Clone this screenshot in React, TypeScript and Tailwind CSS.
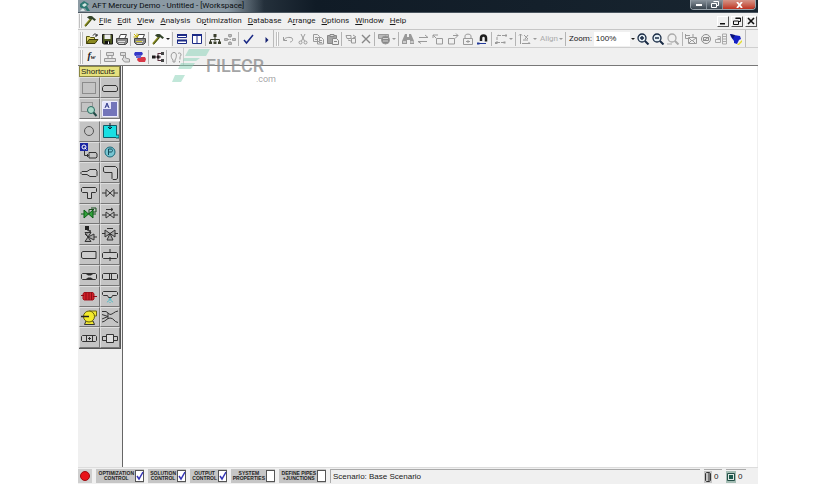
import { useState } from 'react';
import type { ReactNode } from 'react';

const INK = '#1c1c1c';
const DIM = '#9a9a9a';
const NAVY = '#1b2a86';

// 14x12 glyph used by both toolbars.
function Glyph({ children, stroke = INK }: { children: ReactNode; stroke?: string }) {
  return (
    <svg viewBox="0 0 14 12" className="h-3 w-3.5" fill="none" stroke={stroke} strokeWidth="1" aria-hidden>
      {children}
    </svg>
  );
}

// 18x18 glyph used by the shortcut palette.
function Part({ children }: { children: ReactNode }) {
  return (
    <svg viewBox="0 0 18 18" className="h-[18px] w-[18px]" fill="none" stroke="#333" strokeWidth="1" aria-hidden>
      {children}
    </svg>
  );
}

function Tool({ label, children }: { label: string; children: ReactNode }) {
  return (
    <button type="button" aria-label={label} className="flex h-4 w-[15px] shrink-0 items-center justify-center">
      {children}
    </button>
  );
}

function Caret({ label, dim }: { label: string; dim?: boolean }) {
  return (
    <button type="button" aria-label={label} className="flex h-4 w-1.5 shrink-0 items-center justify-center">
      <svg viewBox="0 0 4 2" className="h-0.5 w-1" fill={dim ? DIM : INK} aria-hidden>
        <path d="M0 0h4L2 2z" />
      </svg>
    </button>
  );
}

const Sep = () => <span className="mx-px h-3.5 w-px shrink-0 bg-[#b4b4b4]" />;
const Grip = () => <span className="mr-px h-3.5 w-[3px] shrink-0 border-x border-[#c0c0c0] bg-white" />;

const Hammer = () => (
  <Glyph>
    <path d="M2 11 8 4" stroke="#8a8a1c" strokeWidth="2" />
    <path d="M2.600 11.300 8.600 4.300" stroke="#3a4a1c" />
    <path d="M4 2.500C6 .5 9 .8 10.500 2.500L13 4.500 11.500 6 9 4 7 4.500z" fill="#35452b" stroke="none" />
  </Glyph>
);

const Printer = ({ sun }: { sun?: boolean }) => (
  <Glyph stroke="#444">
    <path d="M4 5 5.500 1.500h6L10 5" fill="#fff" />
    <path d="M1.500 5.500h11v4l-2 2h-7l-2-2z" fill="#888" />
    <path d="M3 8.500h7M4 10.500h5" stroke="#ddd" />
    {sun && <path d="M1 1l3 3M4 .5v3M.5 4H4M6 2 4 4" stroke="#c8b400" />}
    {sun && <path d="M3 8.500h6" stroke="#d8cc30" />}
  </Glyph>
);

const Lens = ({ sign, dim }: { sign?: string; dim?: boolean }) => (
  <Glyph stroke={dim ? '#aaa' : '#182a44'}>
    <circle cx="6" cy="5" r="4" fill={dim ? 'none' : '#e4eef4'} strokeWidth="1.300" />
    {sign && <path d={sign} strokeWidth="1.500" />}
    <path d="m9 8 3.500 3.500" strokeWidth="2" />
    {dim && <path d="M1 11h5" />}
  </Glyph>
);

const FILE_TOOLS = (
  <>
    <Tool label="Open">
      <Glyph>
        <path d="M1.500 10.500v-7h3l1 1h4V6" fill="#e2d870" stroke="#555410" />
        <path d="M1.500 10.500 4 6.500h9l-3 4z" fill="#8a881e" stroke="#3d3c08" />
        <path d="M8 2.500c1-2 3-2 4 0m0-1.500v2h-2" />
      </Glyph>
    </Tool>
    <Tool label="Save">
      <Glyph>
        <path d="M2.500 1.500h10v9.500h-9l-1-1z" fill="#4c5720" />
        <path d="M4.500 1.500h6V6h-6z" fill="#eee" stroke="none" />
        <path d="M5 8h5v3H5z" fill="#111" stroke="none" />
        <path d="M8.500 8.500V11" stroke="#fff" />
      </Glyph>
    </Tool>
    <Tool label="Print"><Printer /></Tool>
    <Sep />
    <Tool label="Print special"><Printer sun /></Tool>
    <Sep />
    <span className="flex h-full items-center bg-[#fafafa]">
      <Tool label="Tool"><Hammer /></Tool>
      <Caret label="Tool options" />
    </span>
    <Sep />
    <Tool label="Tile horizontally">
      <Glyph stroke={NAVY}>
        <path d="M2.500 1.500h9v3h-9zM2.500 7.500h9v3h-9z" fill="#fff" />
        <path d="M2 2h10M2 7.500h10" strokeWidth="2" />
      </Glyph>
    </Tool>
    <Tool label="Tile vertically">
      <Glyph stroke={NAVY}>
        <path d="M2.500 1.500h9v9h-9zM7 1.500v9" fill="#fff" />
        <path d="M2 2h10" strokeWidth="2" />
      </Glyph>
    </Tool>
    <Sep />
    <Tool label="Scenario manager">
      <Glyph stroke="#3a3f2c">
        <path d="M7 3v5M2.500 9V6.500h9V9" />
        <path d="M5.500 1h3v3h-3zM1 8.500h3v2.500H1zM5.500 8.500h3V11h-3zM10 8.500h3V11h-3z" fill="#3a3f2c" stroke="none" />
      </Glyph>
    </Tool>
    <Tool label="Scenario child">
      <Glyph stroke="#a0a0a0">
        <path d="M5.500 1.500h3v2h-3zM1.500 5.500h3v2h-3zM9.500 5.500h3v2h-3zM5.500 9.500h3v2h-3z" fill="#bbb" />
        <path d="M7 4v5M5 6.500h4" strokeDasharray="1 1" />
      </Glyph>
    </Tool>
    <Sep />
    <Tool label="Checklist">
      <Glyph stroke={NAVY}><path d="m3 7 2.500 3L12 2" strokeWidth="1.500" /></Glyph>
    </Tool>
    <span className="w-0.5 shrink-0" />
    <Tool label="Run">
      <Glyph stroke="none"><path d="M7.500 4v6l3-3z" fill="#142070" /></Glyph>
    </Tool>
  </>
);

const EDIT_TOOLS = (
  <>
    <Tool label="Undo">
      <Glyph stroke={DIM}><path d="M3 7c1-3 6-3 8-2 1.500 2 0 4-2 4M2.500 4v3.500H6" /></Glyph>
    </Tool>
    <Tool label="Cut">
      <Glyph stroke={DIM}>
        <path d="m5 1 3.500 7M9 1 5.500 8" />
        <circle cx="4.500" cy="9.500" r="1.500" /><circle cx="9.500" cy="9.500" r="1.500" />
      </Glyph>
    </Tool>
    <Tool label="Copy">
      <Glyph stroke={DIM}>
        <path d="M2.500 1.500h4l2 2v5h-6zM6.500 4.500h4l2 2v4.500h-6z" fill="#eee" />
        <path d="M4 4.500h2M4 6.500h2M8 7.500h3M8 9.500h3" />
      </Glyph>
    </Tool>
    <Tool label="Paste">
      <Glyph stroke="#888">
        <path d="M1.500 2.500h9v8h-9z" fill="#a5a5a5" />
        <path d="M4 1.500h4v2H4z" fill="#ddd" />
        <path d="M6.500 5.500h4l2 2v4h-6z" fill="#eee" />
        <path d="M8 8.500h3" />
      </Glyph>
    </Tool>
    <Sep />
    <Tool label="Duplicate">
      <Glyph stroke={DIM}>
        <path d="M2 2.500h5v3H3zM7.500 5.500h4V10h-4zM9 2l3 2-3 1M4 7l3 1" />
      </Glyph>
    </Tool>
    <Tool label="Delete">
      <Glyph stroke="#888"><path d="m3 2 8 8M11 2l-8 8" strokeWidth="1.400" /></Glyph>
    </Tool>
    <Sep />
    <Tool label="Select special">
      <Glyph stroke="#999">
        <path d="M1.500 1.500h10v4h-10z" fill="#bbb" />
        <circle cx="8.500" cy="7" r="4" fill="#888" />
        <path d="M6 5.500h5M6 8h5" stroke="#d4d4d4" />
      </Glyph>
    </Tool>
    <Caret label="Select options" dim />
    <Sep />
    <Tool label="Find">
      <Glyph stroke="none">
        <path d="M4 1h2v3h2V1h2l3 7v3H9V7H6v4H1V8z" fill="#999" />
        <path d="M2 8h3v2H2zM9.500 8h3v2h-3z" fill="#ccc" />
      </Glyph>
    </Tool>
    <Tool label="Reverse direction">
      <Glyph stroke={DIM}><path d="M3 4.500h9m-3-2.500 3 2.500M11 8.500H2m3 2-3-2" /></Glyph>
    </Tool>
    <Tool label="Rotate left">
      <Glyph stroke={DIM}><path d="M5.500 5.500h6v5.500h-6zM2 5V2h5M2 2l3 3" /></Glyph>
    </Tool>
    <Tool label="Rotate right">
      <Glyph stroke={DIM}><path d="M2.500 5.500h6v5.500h-6zM7 2.500h5M10 .5l2 2-3 3" /></Glyph>
    </Tool>
    <Tool label="Lock">
      <Glyph stroke={DIM}>
        <path d="M4 6V3c0-2.500 6-2.500 6 0v3M2.500 5.500h9v6h-9z" />
        <path d="M7 7v3M5 8.500h4" />
      </Glyph>
    </Tool>
    <Tool label="Snap">
      <Glyph>
        <path d="M5 8V5c0-3.500 5-3.500 5 0v3.500" strokeWidth="2.500" />
        <path d="M2 10.500h8" stroke="#223a9a" /><path d="M1 9.500h2.500v2H1z" fill="#223a9a" stroke="none" />
      </Glyph>
    </Tool>
    <Sep />
    <Tool label="Segments">
      <Glyph stroke={DIM}>
        <path d="M4 2.500h8M3 4v5M3 9.500h7M3 3l2-1" strokeDasharray="3 1" />
        <path d="M11 1.500h2v2h-2zM1 9h2.500v2H1zM9.500 8.500h2v2h-2z" fill={DIM} stroke="none" />
      </Glyph>
    </Tool>
    <Caret label="Segment options" dim />
    <Sep />
    <Tool label="Scale">
      <Glyph stroke={DIM}>
        <path d="M2.500 1v10M1 2.500 2.500 1 4 2.500M4 10.500h8M10.500 9l1.500 1.500" />
        <path d="m6 2 4 4M10 2 7 6M5 7h5" />
      </Glyph>
    </Tool>
    <Caret label="Scale options" dim />
    <button type="button" className="ml-0.5 font-[Roboto,sans-serif] text-[8px] leading-4 text-[#ababab]">Align</button>
    <Caret label="Align options" dim />
    <Sep />
  </>
);

const VIEW_TOOLS = (
  <>
    <Tool label="Zoom in"><Lens sign="M4 5h4M6 3v4" /></Tool>
    <Tool label="Zoom out"><Lens sign="M4 5h4" /></Tool>
    <Tool label="Zoom to fit"><Lens dim /></Tool>
    <Sep />
    <Tool label="Show group">
      <Glyph stroke={DIM}>
        <path d="M1.500 1v4.500h3M2 2.500h4M4.500 4.500h8v6h-8z" />
        <path d="m5 5 3 3 4-3M5 10l3-3 3 3M9 1v3" />
      </Glyph>
    </Tool>
    <Tool label="Hide">
      <Glyph stroke="#8c8c8c">
        <circle cx="7" cy="6" r="4.500" /><path d="M4.500 4.500h5v3h-5zM4 8l6-4" />
      </Glyph>
    </Tool>
    <Tool label="Show list">
      <Glyph stroke="#aaa">
        <path d="M8.500 1v10h4V1zM8.500 3.500h4M8.500 6h4M8.500 8.500h4M3.500 5.500h3M3.500 3.500h3v6h-5v-3h5" />
      </Glyph>
    </Tool>
    <Tool label="Filter">
      <Glyph stroke="none">
        <path d="m1 1 4 1 6 1 1 3-2 1-2 4-3-1V8L2 4z" fill="#1420c4" />
        <path d="M1 1l5 1-2 4z" fill="#09106e" />
        <path d="m8 12 5-5v2l-3 3z" fill="#e5dd30" />
      </Glyph>
    </Tool>
  </>
);

const MODEL_TOOLS = (
  <>
    <Tool label="Pipe tool">
      <Glyph stroke={DIM}>
        <path d="M3.500 1.500h7v3h-7zM1.500 7.500h11v3h-11zM5 4.500v3M9 4.500v3" fill="#e0e0e0" />
      </Glyph>
    </Tool>
    <Tool label="Junction tool">
      <Glyph stroke={DIM}>
        <path d="M2.500 1.500h5v3h-5zM5.500 7V4.500h2V7l4 1v3h-5L4 8z" fill="#ddd" />
      </Glyph>
    </Tool>
    <Tool label="Connections">
      <Glyph stroke="none">
        <path d="M2 1h7l1 2-2 2H2L1 3z" fill="#3538c8" />
        <path d="M5 6h7l1 2-1 3H6L4 9z" fill="#d83848" />
        <path d="M3 4h5v3H3z" fill="#6868d0" />
      </Glyph>
    </Tool>
    <Sep />
    <Tool label="Network">
      <Glyph>
        <path d="M3 6h4M7 2v8M7 2.500h3M7 9.500h3M7 6h3" stroke="#5c3040" />
        <path d="M1 4.500h3.500v3H1zM6 4.500h2.500v3H6z" fill="#1c1c1c" stroke="none" />
        <path d="M10 1h3v3h-3zM10 8h3v3h-3z" fill="#444" stroke="none" />
      </Glyph>
    </Tool>
    <Sep />
    <Tool label="Help topics">
      <Glyph stroke={DIM}>
        <path d="M4 9C1 6 2 1.500 5 1.500S8 6 6 9v2H4zM9 2.500c3-2 4 2 2 3v3M10.500 10v1.500" />
      </Glyph>
    </Tool>
  </>
);

const PIPE = 'M2.500 6.500h13l1 1v4l-1 1h-13l-1-1v-4z';

const SELECTION: [string, ReactNode][] = [
  ['Select area', <path d="M2.500 3.500h13v11h-13z" stroke="#555" strokeDasharray="1 1" />],
  ['Pipe', <path d="M3 6.500h12l1.500 2v3l-1.500 1H3l-1.500-1v-3z" fill="#ccc" />],
  ['Zoom select', <>
    <path d="M1.500 2.500h11v9h-11z" stroke="#666" strokeDasharray="1 1" />
    <circle cx="11" cy="10" r="3.500" fill="#a9d8c8" stroke="#276a60" />
    <path d="m13.500 12.500 3 3.500" stroke="#244c48" strokeWidth="2" />
  </>],
  ['Annotation', <>
    <path d="M1.500 1.500h15v15h-15z" fill="#7375ba" stroke="#eef" />
    <path d="M2 2h8v7H2z" fill="#e4e4fa" stroke="none" />
    <path d="m4 8 2-5 2 5M5 6h2" stroke="#333b8c" />
  </>],
];

const PARTS: [string, ReactNode][] = [
  ['Branch', <circle cx="9" cy="9" r="4.500" stroke="#555" />],
  ['Reservoir', <>
    <path d="M2.500 3.500h13v12h-13z" fill="#19dfe2" stroke="#125b66" />
    <path d="M9 1v6M7 5l2 2 2-2" stroke="#123" /><path d="M15 13h3v3h-3" fill="#19dfe2" stroke="#125b66" />
  </>],
  ['Assigned flow', <>
    <path d="M0 0h8v8H0z" fill="#1c27a3" stroke="none" />
    <circle cx="4" cy="4" r="2" stroke="#fff" /><path d="m4.500 4.500 2 2" stroke="#fff" />
    <path d="M4.500 8v4.500h4M7 11l1.500 1.500L7 14M9 9.500h7l1 1.500v3l-1 1H9z" />
  </>],
  ['Assigned pressure', <>
    <circle cx="9" cy="9" r="5" fill="#78c5d2" stroke="#1a6878" />
    <path d="M7.500 12V6h2.500c2 0 2 3 0 3H8" stroke="#124a58" />
  </>],
  ['Area change', <path d="M2 7.500h5l3-2h6l1 2v4l-1 1h-6l-3-2H2l-1-1v-1z" fill="#ccc" />],
  ['Bend', <path d="M3.500 2.500h11l2 2v10l-1.500 1h-3l-1-1V8.500h-7l-1.500-1v-4z" fill="#ccc" />],
  ['Tee or wye', <path d="M2.500 3.500h13l1 1v3l-1 1h-4v6h-4v-6h-5l-1-1v-3z" fill="#ccc" />],
  ['Valve', <path d="M1 9h4m8 0h4M5 5.500v7l8-7v7z" fill="#ccc" />],
  ['Control valve', <>
    <path d="M1 9h3m9 0h3M4 5v8l9-8v8z" fill="#31a23a" stroke="#0c5d16" />
    <path d="M9 9V4.500h5M11 3h5v4h-3" stroke="#164d1c" />
  </>],
  ['Check valve', <path d="M1 10h4m8 0h4M5 7v6l8-6v6zM5 4.500h7m-2-1.500 2 1.500L10 6" />],
  ['Relief valve', <>
    <path d="M5 7.500h6L5 16.500h6zM8 12l6-3v6z" fill="#aaa" />
    <path d="M5 1h4v4H5z" fill="#222" stroke="none" /><path d="M7 5l4 1-4 2M14 12h3M5 9l3 3" />
  </>],
  ['Three-way valve', <path d="M1 8.500h3m10 0h3M4 5v7l10-7v7zM9 8.500l-3 6.500h6zM6 3.500h6" fill="#aaa" />],
  ['Dead end', <path d="M3 5.500h13v7H3l-1.500-1v-5z" fill="#ccc" />],
  ['Orifice', <><path d={PIPE} fill="#ccc" /><path d="M9 3v4m0 4v4" /></>],
  ['Venturi', <>
    <path d={PIPE} fill="#ccc" />
    <path d="M6 6.500h7L11 8H8zM6 12.500h7L11 11H8z" fill="#222" />
  </>],
  ['Screen', <><path d={PIPE} fill="#ccc" /><path d="M8.500 6.500v6M10.500 6.500v6" /></>],
  ['Heat exchanger', <>
    <path d="M4 5.500h9l1 1.500v5l-1 1H4l-1-1V7z" fill="#ce2028" stroke="#a3141e" />
    <path d="M1 8.500h3m9 1h4M6 5v8M9 5v8M11.500 5v8" stroke="#8f0c16" />
  </>],
  ['Spray discharge', <>
    <path d="M2.500 4.500h13l1 1v2l-1 1h-4l-1 2h-3l-1-2h-4l-1-1v-2z" fill="#ccc" />
    <path d="m9 11-3 5m3-4v4m0-5 3 5" stroke="#40bcc8" strokeDasharray="2 1" />
  </>],
  ['Pump', <>
    <path d="M4.500 16.500 6 13h7l1.500 3.500z" fill="#efe632" stroke="#333" />
    <path d="M9 3h7.500v5H14" fill="#efe632" stroke="#706a10" />
    <circle cx="9" cy="8.500" r="5.500" fill="#f3eb2b" stroke="#65600e" />
    <path d="M1 8.500h8" stroke="#222" strokeWidth="1.500" />
  </>],
  ['Jet pump', <path d="M1 3.500h4l4 3c3 0 4-3 8-3.500M1 14c3 0 5-4 8-4 4 0 4 4 8 4.500M1 6.500l6 2-6 2.500M7 5v6" />],
  ['General component', <>
    <path d={PIPE} fill="#ccc" /><path d="M6.500 6.500v6M12.500 6.500v6M8 9.500h3M9.500 8v3" />
  </>],
  ['Volume balance', <>
    <path d="M1.500 7.500h4v4h-4zM12.500 7.500h4v4h-4z" fill="#ccc" />
    <path d="M5.500 5.500h7v8h-7z" fill="#ddd" />
  </>],
];

const MENUS: [string, string, string][] = [
  ['', 'F', 'ile'],
  ['', 'E', 'dit'],
  ['', 'V', 'iew'],
  ['', 'A', 'nalysis'],
  ['O', 'p', 'timization'],
  ['', 'D', 'atabase'],
  ['A', 'r', 'range'],
  ['', 'O', 'ptions'],
  ['', 'W', 'indow'],
  ['', 'H', 'elp'],
];

const CONTROLS = [
  { lines: ['OPTIMIZATION', 'CONTROL'], done: true, width: 'w-12' },
  { lines: ['SOLUTION', 'CONTROL'], done: true, width: 'w-[38px]' },
  { lines: ['OUTPUT', 'CONTROL'], done: true, width: 'w-[37px]' },
  { lines: ['SYSTEM', 'PROPERTIES'], done: false, width: 'w-11' },
  { lines: ['DEFINE PIPES', '+JUNCTIONS'], done: false, width: 'w-[47px]' },
];

function Palette({ items, size }: { items: [string, ReactNode][]; size: string }) {
  return (
    <div className={`grid grid-cols-2 bg-[#bdbdbd] ${size}`}>
      {items.map(([name, art]) => (
        <button
          key={name}
          type="button"
          aria-label={name}
          className="flex min-h-0 items-center justify-center overflow-hidden border border-t-[#dedede] border-r-[#777] border-b-[#777] border-l-[#dedede] bg-[#c4c4c4]"
        >
          <Part>{art}</Part>
        </button>
      ))}
    </div>
  );
}

function ControlBox({ lines, done, width }: { lines: string[]; done: boolean; width: string }) {
  const [on, setOn] = useState(done);
  return (
    <label className={`flex h-3.5 shrink-0 items-center justify-end gap-px bg-[#c6c6c6] ${width}`}>
      <span className="text-center text-[5px] leading-[5px] font-bold whitespace-nowrap text-[#222]">
        {lines[0]}
        <br />
        {lines[1]}
      </span>
      <span className="grid shrink-0">
        <input
          type="checkbox"
          checked={on}
          onChange={() => setOn(!on)}
          className="col-start-1 row-start-1 h-3 w-[9px] appearance-none border border-[#555] bg-white"
        />
        {on && (
          <svg viewBox="0 0 9 12" className="pointer-events-none col-start-1 row-start-1 h-3 w-[9px]" fill="none" aria-hidden>
            <path d="m2 6 2 3 4-7" stroke="#3434b4" strokeWidth="1.500" />
          </svg>
        )}
      </span>
    </label>
  );
}

function TitleBar() {
  return (
    <header className="flex h-[13px] shrink-0 items-start border-b border-[#4b5660] bg-linear-to-r from-[#76858f] via-[#101b26] via-35% to-[#182530]">
      <div className="flex h-3 items-center gap-0.5 bg-linear-to-r from-[#8d9ba4] via-[#8998a3] via-80% to-transparent pr-5 pl-px">
        <svg viewBox="0 0 11 11" className="h-[11px] w-[11px]" aria-hidden>
          <path d="M1 3 5 0l5 3-2 2 3 5H8L6 7 4 8 1 6z" fill="#2d7771" />
          <path d="m3 4 3-2 2 2-3 2z" fill="#d4e6e2" />
          <path d="M1 10 4 7l2 3z" fill="#d8e2e4" />
        </svg>
        <h1 className="font-[Roboto,sans-serif] text-[8px] leading-3 whitespace-nowrap text-[#080c10]">
          AFT Mercury Demo - Untitled - [Workspace]
        </h1>
      </div>
      <div className="mr-0.5 ml-auto flex h-2.5 shrink-0 overflow-hidden rounded-b border border-t-0 border-[#9aa4ac]">
        <button type="button" aria-label="Minimize" className="flex w-4 items-center justify-center border-r border-[#87919a] bg-linear-to-b from-[#8a949d] to-[#3b4650]">
          <span className="h-0.5 w-1.5 bg-white" />
        </button>
        <button type="button" aria-label="Restore" className="flex w-4 items-center justify-center border-r border-[#87919a] bg-linear-to-b from-[#8a949d] to-[#3b4650]">
          <svg viewBox="0 0 8 7" className="h-[7px] w-2" fill="none" stroke="#fff" aria-hidden>
            <path d="M2.500 .5h5v4h-2M.5 2.500h5v4h-5z" />
          </svg>
        </button>
        <button type="button" aria-label="Close" className="flex w-8 items-center justify-center bg-linear-to-b from-[#d49488] to-[#bd2f1e]">
          <svg viewBox="0 0 7 6" className="h-1.5 w-[7px]" stroke="#fff" strokeWidth="1.800" aria-hidden>
            <path d="m1 0 5 6M6 0 1 6" />
          </svg>
        </button>
      </div>
    </header>
  );
}

const MDI_BUTTON = 'flex h-[11px] w-3 items-center justify-center border border-t-white border-r-[#555] border-b-[#555] border-l-white bg-[#f0f0f0]';

function MenuBar() {
  return (
    <nav className="flex h-[17px] shrink-0 items-center border-b border-[#c6c6c6] pl-px">
      <Grip />
      <Hammer />
      <div className="ml-0.5 flex gap-1.5 font-[Roboto,sans-serif] text-[8px] leading-4">
        {MENUS.map(([pre, key, post]) => (
          <button key={key + post} type="button">
            {pre}<u>{key}</u>{post}
          </button>
        ))}
      </div>
      <div className="mr-px ml-auto flex gap-0.5">
        <button type="button" aria-label="Minimize document" className={MDI_BUTTON}>
          <svg viewBox="0 0 8 8" className="h-2 w-2" aria-hidden><path d="M1 6h5v1.500H1z" fill="#111" /></svg>
        </button>
        <button type="button" aria-label="Restore document" className={MDI_BUTTON}>
          <svg viewBox="0 0 8 8" className="h-2 w-2" fill="none" stroke="#111" aria-hidden>
            <path d="M2.500 1h5v3.500h-2M2.500 1.500h5M.5 4h5v3.500h-5z" />
          </svg>
        </button>
        <button type="button" aria-label="Close document" className={MDI_BUTTON}>
          <svg viewBox="0 0 8 8" className="h-2 w-2" stroke="#111" strokeWidth="1.600" aria-hidden>
            <path d="m1 1 6 6M7 1 1 7" />
          </svg>
        </button>
      </div>
    </nav>
  );
}

function Watermark() {
  return (
    <div className="pointer-events-none absolute top-[49px] left-[94px] flex">
      <svg viewBox="0 0 38 34" className="h-[34px] w-[38px]" fill="#83cfb3" fillOpacity="0.5" aria-hidden>
        <path d="M17 0h21l-4 7H13zM12 9h16l-4 3H11zM9 14h14l-4 6H6zM3 26h10l-4 7H0z" />
      </svg>
      <div className="-ml-1 flex flex-col pt-2 font-[Roboto,sans-serif] text-[#8b8d8e]/80">
        <span className="text-[18px] leading-[18px] font-medium">FILECR</span>
        <span className="-mr-3 self-end text-[9px] leading-[9px]">.com</span>
      </div>
    </div>
  );
}

export default function App() {
  const [zoom, setZoom] = useState('100%');
  return (
    <div className="min-h-screen bg-white px-[78px] font-['Liberation_Sans',Arial,sans-serif] text-[#1a1a1a]">
      <div className="relative flex min-h-screen flex-col bg-[#f0f0f0]">
        <TitleBar />
        <MenuBar />

        <div className="flex h-[18px] shrink-0 items-center overflow-hidden border-b border-[#cfcfcf]">
          <div className="flex h-full items-center border-r border-[#bbb] pr-px pl-0.5">
            <Grip />
            {FILE_TOOLS}
          </div>
          <div className="flex h-full items-center border-r border-[#bbb] pr-px pl-0.5">
            <Grip />
            {EDIT_TOOLS}
            <label htmlFor="zoom" className="ml-0.5 font-[Roboto,sans-serif] text-[8px] leading-4">Zoom:</label>
            <select
              id="zoom"
              value={zoom}
              onChange={(e) => setZoom(e.target.value)}
              className="ml-0.5 h-3.5 w-9 appearance-none bg-white pl-0.5 text-[8px] leading-3.5"
            >
              <option>50%</option>
              <option>100%</option>
              <option>200%</option>
            </select>
            <Caret label="Zoom levels" />
            {VIEW_TOOLS}
          </div>
        </div>

        <div className="flex h-[18px] shrink-0 items-center border-b border-[#777]">
          <div className="flex h-full items-center border-r border-[#ccc] pl-0.5">
            <Grip />
            <button type="button" aria-label="Functions" className="w-[15px] text-center font-['Liberation_Serif',serif] text-[10px] leading-4 font-bold italic">
              f<span className="text-[7px]">w</span>
            </button>
            <Sep />
            {MODEL_TOOLS}
          </div>
        </div>

        <main className="flex flex-1">
          <aside className="w-[45px] shrink-0 border-r border-[#666]">
            <div className="ml-px w-[42px] border-r border-b border-[#555]">
              <h2 className="h-[11px] border border-[#8b8742] bg-[#e6e17d] pl-px text-[8px] leading-[9px]">Shortcuts</h2>
              <Palette items={SELECTION} size="h-[42px]" />
              <div className="h-0.5 bg-white" />
              <Palette items={PARTS} size="h-[227px]" />
            </div>
          </aside>
          <section aria-label="Workspace" className="mr-px flex-1 bg-white" />
        </main>

        <footer className="flex h-[17px] shrink-0 items-center gap-1 overflow-hidden border-t border-[#ddd]">
          <span className="flex h-3.5 w-3.5 shrink-0 items-center justify-center bg-[#cfcfcf]">
            <span className="h-2.5 w-2.5 rounded-full border border-[#a00c10] bg-[#e8141a]" />
          </span>
          <div className="flex shrink-0 gap-1">
            {CONTROLS.map((c) => <ControlBox key={c.lines.join()} {...c} />)}
          </div>
          <p className="h-3.5 flex-1 border-t border-l border-[#aaa] pl-0.5 text-[8px] leading-[13px]">Scenario: Base Scenario</p>
          <div className="flex h-3.5 w-[18px] items-center gap-0.5 border-t border-[#aaa] text-[8px]">
            <svg viewBox="0 0 8 12" className="h-3 w-2 shrink-0 bg-[#c4c4c4]" fill="none" stroke="#333" aria-hidden>
              <path d="M2.500 1.500h3l1 1v7l-1 1h-3l-1-1v-7zM5 2v8" />
            </svg>
            0
          </div>
          <div className="mr-3 flex h-3.5 w-5 items-center gap-0.5 border-t border-[#aaa] text-[8px]">
            <svg viewBox="0 0 10 12" className="h-3 w-2.5 shrink-0 bg-[#a5bdb4]" aria-hidden>
              <path d="M1.500 2.500h7v7h-7z" fill="#dfe9e4" stroke="#245148" />
              <path d="M3 4h4v4H3z" fill="#1d5a4d" />
            </svg>
            0
          </div>
        </footer>
        <Watermark />
      </div>
    </div>
  );
}
